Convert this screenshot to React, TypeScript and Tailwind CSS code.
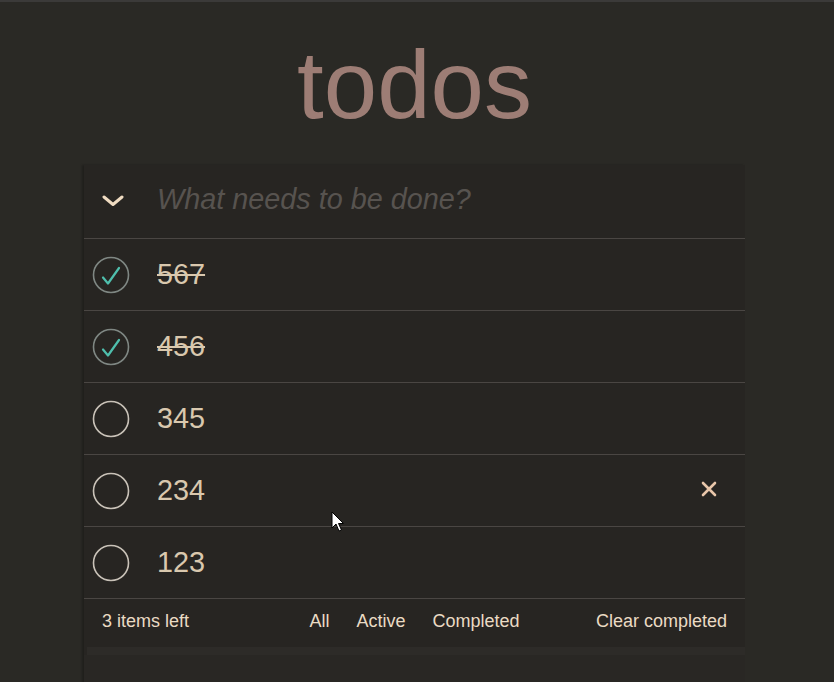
import React from "react";

type Todo = { id: number; title: string; completed: boolean };

const todos: Todo[] = [
  { id: 5, title: "567", completed: true },
  { id: 4, title: "456", completed: true },
  { id: 3, title: "345", completed: false },
  { id: 2, title: "234", completed: false },
  { id: 1, title: "123", completed: false },
];

function Toggle({ checked }: { checked: boolean }) {
  return (
    <svg width="38" height="38" viewBox="0 0 38 38" className="shrink-0">
      <circle cx="19" cy="19" r="17.5" fill="none" stroke={checked ? "#7f8783" : "#c9c2b8"} strokeWidth="1.6" />
      {checked && <path d="M11 21.5 L16 27.5 L27 12" fill="none" stroke="#4fbfad" strokeWidth="2.2" strokeLinecap="round" strokeLinejoin="round" />}
    </svg>
  );
}

export default function App() {
  const hovered = 3;

  return (
    <div className="relative h-[682px] overflow-hidden bg-[#2a2925] font-['Liberation_Sans',Arial,sans-serif]">
      <div className="h-[2px] bg-[#3b3a39]" />
      <div className="ml-[84px] w-[661px]">
        <h1 className="mt-[35px] text-center text-[96px] leading-[96px] font-normal text-[#9d7d75]">todos</h1>

        <section className="mt-[32px] bg-[#272522] shadow-[-2px_0_2px_rgba(0,0,0,0.25)]">
          <header className="flex h-[74px] items-center border-b border-[#4a4643] pb-[4px]">
            <div className="flex w-[58px] justify-center pt-[2px]">
              <svg width="22" height="12" viewBox="0 0 22 12">
                <path d="M2 2 L11 9.5 L20 2" fill="none" stroke="#f0dcc2" strokeWidth="3" strokeLinecap="round" strokeLinejoin="round" />
              </svg>
            </div>
            <div className="ml-[15px] text-[28.8px] italic text-[#57534f]">What needs to be done?</div>
          </header>

          <ul>
            {todos.map((t, i) => (
              <li key={t.id} className="flex h-[72px] items-center border-b border-[#4a4643] pl-[92px] pr-[28px]">
                <div className="-ml-[84px] flex w-[64px] items-center">
                  <Toggle checked={t.completed} />
                </div>
                <span className={`ml-[1px] flex-1 text-[28.8px] text-[#d9c8ae] ${t.completed ? "line-through decoration-[2px]" : ""}`}>{t.title}</span>
                {i === hovered && (
                  <svg width="16" height="16" viewBox="0 0 16 16" className="mt-[-4px]">
                    <path d="M2 2 L14 14 M14 2 L2 14" stroke="#e8c6aa" strokeWidth="2.6" strokeLinecap="round" />
                  </svg>
                )}
              </li>
            ))}
          </ul>

          <footer className="grid h-[48px] grid-cols-[1fr_auto_1fr] items-center px-[18px] pb-[4px] text-[18px] text-[#eadbc4]">
            <span>3 items left</span>
            <ul className="flex gap-[27px]">
              <li>All</li>
              <li>Active</li>
              <li>Completed</li>
            </ul>
            <span className="justify-self-end">Clear completed</span>
          </footer>
          <div className="ml-[3px] h-[8px] bg-[#2d2b28]" />
          <div className="h-[30px] bg-[#292724]" />
        </section>
      </div>

      <svg width="14" height="22" viewBox="0 0 14 22" className="absolute left-[331px] top-[511px]">
        <path d="M1 1 L1 17 L5 13 L8 20 L10.5 19 L7.5 12.5 L12.5 12.5 Z" fill="#ffffff" stroke="#000000" strokeWidth="1" strokeLinejoin="round" />
      </svg>
    </div>
  );
}
